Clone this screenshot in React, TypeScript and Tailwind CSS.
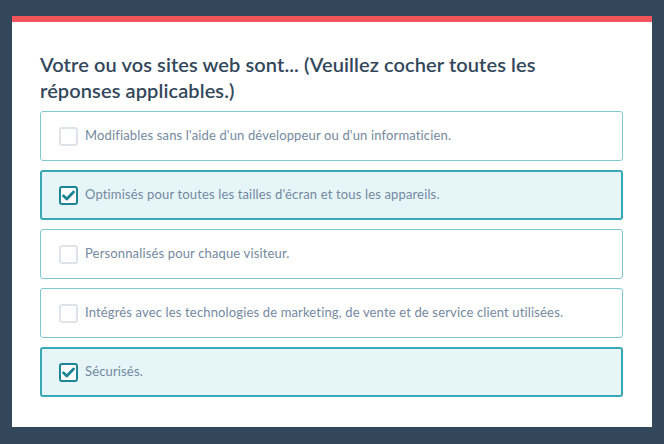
import React from 'react';

const options = [
  { label: "Modifiables sans l'aide d'un développeur ou d'un informaticien.", checked: false },
  { label: "Optimisés pour toutes les tailles d'écran et tous les appareils.", checked: true },
  { label: 'Personnalisés pour chaque visiteur.', checked: false },
  { label: 'Intégrés avec les technologies de marketing, de vente et de service client utilisées.', checked: false },
  { label: 'Sécurisés.', checked: true },
];

function Checkbox({ checked }: { checked: boolean }) {
  if (!checked) {
    return <div className="w-[19px] h-[19px] rounded-[3px] border-2 border-[#dde3e8] bg-white shrink-0" />;
  }
  return (
    <div className="w-[19px] h-[19px] rounded-[3px] border-2 border-[#1d8593] bg-white shrink-0 flex items-center justify-center">
      <svg width="13" height="11" viewBox="0 0 13 11">
        <path d="M1.5 5.8 L4.8 9 L11.5 2" fill="none" stroke="#1d8593" strokeWidth="2.8" strokeLinecap="round" strokeLinejoin="round" />
      </svg>
    </div>
  );
}

export default function App() {
  return (
    <div className="w-[664px] h-[444px] bg-[#33475b] pt-[16px] pl-[12px] font-['Lato','Open_Sans',sans-serif]">
      <div className="w-[640px] h-[411px] bg-white flex flex-col">
        <div className="h-[6px] bg-[#f2545b]" />
        <div className="pl-[28px] pr-[29px] pt-[29px]">
          <h2 className="w-[520px] text-[20px] leading-[26px] font-semibold text-[#33475b] tracking-[0.1px]">
            Votre ou vos sites web sont... (Veuillez cocher toutes les réponses applicables.)
          </h2>
          <div className="mt-[8px] flex flex-col gap-[9px]">
            {options.map((o) => (
              <div
                key={o.label}
                className={
                  o.checked
                    ? 'h-[50px] rounded-[3px] border-2 border-[#3aa9b7] bg-[#e5f5f8] flex items-center gap-[7px] pl-[17px]'
                    : 'h-[50px] rounded-[3px] border border-[#7fc9d3] bg-white flex items-center gap-[7px] pl-[18px]'
                }
              >
                <Checkbox checked={o.checked} />
                <span className="text-[13px] text-[#7489a0] tracking-[0.15px]">{o.label}</span>
              </div>
            ))}
          </div>
        </div>
      </div>
    </div>
  );
}
